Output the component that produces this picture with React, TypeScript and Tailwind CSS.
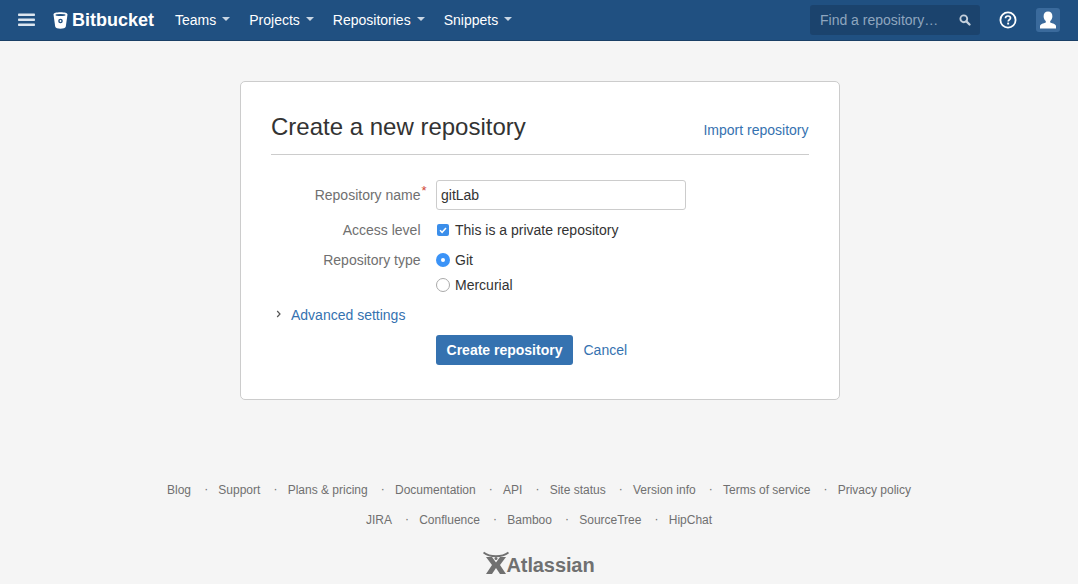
import React from "react";

const Caret = () => (
  <span className="ml-[6px] inline-block w-0 h-0 border-x-[4px] border-x-transparent border-t-[4px] border-t-[#c9d6e4] translate-y-[-1px]" />
);

const NavItem = ({ label }: { label: string }) => (
  <div className="flex items-center text-[14px] text-white">
    <span>{label}</span>
    <Caret />
  </div>
);

const Dot = () => <span className="text-[#707070] w-[27.3px] text-center pl-[3px] relative top-[-1px]">·</span>;

const FooterRow = ({ items }: { items: string[] }) => (
  <div className="flex justify-center items-center h-[30px] text-[12px] text-[#707070]">
    {items.map((t, i) => (
      <React.Fragment key={t}>
        {i > 0 && <Dot />}
        <span>{t}</span>
      </React.Fragment>
    ))}
  </div>
);

const Row = ({ label, star, children, h }: { label: string; star?: boolean; children: React.ReactNode; h: string }) => (
  <div className={`flex items-center ${h}`}>
    <div className="w-[149.500px] relative text-right text-[#707070]">
      {label}
      {star && <span className="absolute right-[-6px] top-[-4px] text-[#d04437] text-[13px]">*</span>}
    </div>
    <div className="ml-[15.500px] flex items-center">{children}</div>
  </div>
);

export default function App() {
  return (
    <div className="h-[584px] overflow-hidden bg-[#f5f5f5] font-['Liberation_Sans',Arial,sans-serif] text-[14px] text-[#333333]">
      <header className="h-[41px] bg-[#205081] border-b border-[#1a3f66] flex items-center">
        <svg width="18" height="14" viewBox="0 0 18 14" className="ml-[18px]">
          <rect x="0" y="0.5" width="17" height="2.6" rx="0.8" fill="#dce6f0" />
          <rect x="0" y="5.5" width="17" height="2.6" rx="0.8" fill="#dce6f0" />
          <rect x="0" y="10.5" width="17" height="2.6" rx="0.8" fill="#dce6f0" />
        </svg>
        <div className="flex items-center ml-[17px]">
          <svg width="15" height="17" viewBox="0 0 15 17">
            <path d="M0.500 2.500C0.500 1 3.500 0.300 7.500 0.300S14.500 1 14.500 2.500L12.800 14.500C12.600 16 10 16.700 7.500 16.700S2.400 16 2.200 14.500Z" fill="#fff" />
            <ellipse cx="7.500" cy="3" rx="5" ry="1" fill="#205081" />
            <circle cx="7.500" cy="9" r="2.300" fill="#205081" />
            <circle cx="7.500" cy="9" r="0.900" fill="#fff" />
          </svg>
          <span className="ml-[4px] text-[18px] leading-[20px] font-bold text-white">Bitbucket</span>
        </div>
        <nav className="flex items-center gap-[19px] ml-[21px]">
          <NavItem label="Teams" />
          <NavItem label="Projects" />
          <NavItem label="Repositories" />
          <NavItem label="Snippets" />
        </nav>
        <div className="ml-auto flex items-center">
          <div className="w-[170px] h-[30px] rounded-[3px] bg-[#1b436d] flex items-center pl-[10px] pr-[9px]">
            <span className="text-[#8fa6bf] text-[14px]">Find a repository…</span>
            <svg width="12" height="12" viewBox="0 0 13 13" className="ml-auto">
              <circle cx="5.200" cy="5.200" r="3.700" fill="none" stroke="#c5d0dc" strokeWidth="2" />
              <path d="M8 8l3.400 3.400" stroke="#c5d0dc" strokeWidth="2.400" strokeLinecap="round" />
            </svg>
          </div>
          <svg width="18" height="18" viewBox="0 0 18 18" className="ml-[19px]">
            <circle cx="9" cy="9" r="7.600" fill="none" stroke="#fff" strokeWidth="1.800" />
            <path d="M6.500 7.200C6.500 5.700 7.600 5 9 5s2.500.8 2.500 2.100c0 1.700-2.300 1.700-2.300 3.400" fill="none" stroke="#fff" strokeWidth="1.700" />
            <rect x="8.200" y="11.600" width="1.900" height="1.900" fill="#fff" />
          </svg>
          <div className="ml-[19px] mr-[18px] w-[24px] h-[24px] rounded-[3px] bg-[#3a6a9c] flex items-center justify-center overflow-hidden">
            <svg width="24" height="24" viewBox="0 0 24 24">
              <path d="M12 3.500c-2.800 0-4.400 2-4.400 4.800 0 2 .9 3.800 2.200 4.800v1.400c-2.600.8-5.300 1.700-5.800 3.300V20.500h16v-2.700c-.5-1.600-3.200-2.500-5.800-3.300v-1.400c1.300-1 2.200-2.800 2.200-4.800 0-2.800-1.600-4.800-4.400-4.800z" fill="#fff" />
            </svg>
          </div>
        </div>
      </header>

      <main className="flex justify-center pt-[40px] pl-[2px]">
        <div className="w-[600px] h-[319px] bg-white border border-[#cccccc] rounded-[5px] px-[30px]">
          <div className="h-[73px] flex items-end justify-between border-b border-[#cccccc] pb-[12px]">
            <h1 className="text-[24px] leading-[30px] text-[#333333]">Create a new repository</h1>
            <a className="text-[#3572b0] text-[14px] leading-[20px] pb-[2px] mr-[0.5px]">Import repository</a>
          </div>
          <div className="pt-[25px]">
            <Row label="Repository name" star h="h-[30px]">
              <div className="w-[250px] h-[30px] border border-[#cccccc] rounded-[3px] flex items-center pl-[4px] text-[#333333]">gitLab</div>
            </Row>
            <div className="h-[5px]" />
            <Row label="Access level" h="h-[30px]">
              <span className="w-[12px] h-[12px] rounded-[2px] bg-[#3b8eea] flex items-center justify-center ml-[1px]">
                <svg width="10" height="10" viewBox="0 0 10 10"><path d="M2 5.200l2.100 2.100L8 3" fill="none" stroke="#fff" strokeWidth="1.500" /></svg>
              </span>
              <span className="ml-[6px]">This is a private repository</span>
            </Row>
            <Row label="Repository type" h="h-[30px]">
              <span className="w-[14px] h-[14px] rounded-full bg-[#3b93f7] flex items-center justify-center">
                <span className="w-[4px] h-[4px] rounded-full bg-white" />
              </span>
              <span className="ml-[5px]">Git</span>
            </Row>
            <Row label="" h="h-[20px]">
              <span className="w-[14px] h-[14px] rounded-full bg-white border border-[#aaaaaa]" />
              <span className="ml-[5px]">Mercurial</span>
            </Row>
            <div className="h-[30px] mt-[5px] flex items-center">
              <svg width="6" height="8" viewBox="0 0 6 8" className="ml-[5px] -translate-y-[1px]">
                <path d="M1.200 1l2.800 3-2.800 3" fill="none" stroke="#555" strokeWidth="1.200" />
              </svg>
              <a className="ml-[9px] text-[#3572b0]">Advanced settings</a>
            </div>
            <div className="flex items-center ml-[165px] mt-[5px]">
              <div className="w-[137px] h-[30px] bg-[#3572b0] rounded-[3px] text-white font-bold flex items-center justify-center">Create repository</div>
              <a className="ml-[10.500px] text-[#3572b0]">Cancel</a>
            </div>
          </div>
        </div>
      </main>

      <footer className="pt-[75px]">
        <FooterRow items={["Blog", "Support", "Plans & pricing", "Documentation", "API", "Site status", "Version info", "Terms of service", "Privacy policy"]} />
        <FooterRow items={["JIRA", "Confluence", "Bamboo", "SourceTree", "HipChat"]} />
        <div className="flex justify-center items-start mt-[15px] text-[#707070]">
          <svg width="26" height="25" viewBox="0 0 26 25" className="mr-[-3px]">
            <path d="M0.500 2.500C7 7.500 19 7.500 25.500 2.500" fill="none" stroke="#707070" strokeWidth="1.800" />
            <path d="M3 7h6l4 5.500L17 7h6l-6 8 6 9h-6l-4-6-4 6H3l6-9Z" fill="#707070" />
            <circle cx="13" cy="8.500" r="1.500" fill="#707070" />
          </svg>
          <span className="text-[20px] font-bold tracking-[-0.1px] leading-[25px] mt-[3px]">Atlassian</span>
        </div>
      </footer>
    </div>
  );
}
